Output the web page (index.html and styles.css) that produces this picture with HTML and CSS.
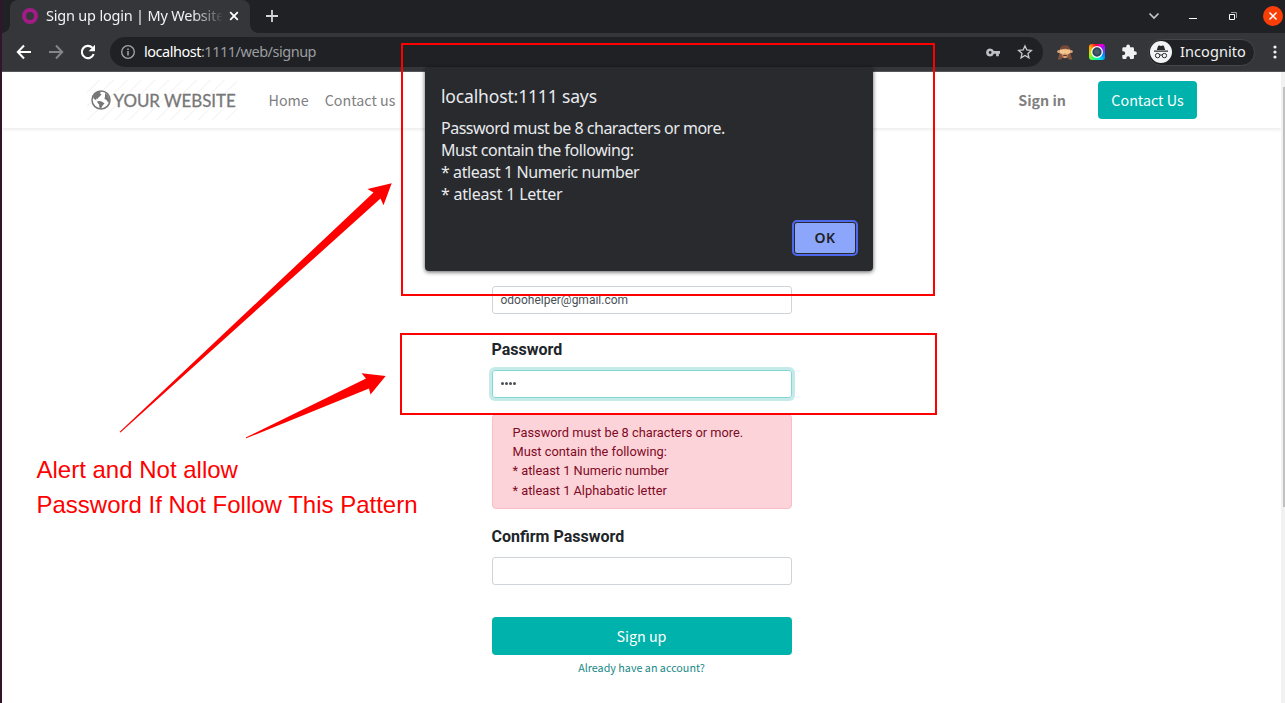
FILE: index.html
```
<!DOCTYPE html>
<html lang="en">
<head>
<meta charset="utf-8">
<title>Sign up login | My Website</title>
<link rel="stylesheet" href="styles.css">
</head>
<body>
<div class="window">
  <div class="tabbar">
    <div class="tab">
      <svg class="favicon" width="16" height="16" viewBox="0 0 16 16"><circle cx="8" cy="8" r="6" fill="none" stroke="#a21b86" stroke-width="4"/></svg>
      <span class="tab-title">Sign up login | My Website</span>
      <svg class="tab-close" width="10" height="10" viewBox="0 0 10 10"><path d="M1.2 1.2l7.6 7.6M8.8 1.2L1.2 8.8" stroke="#fff" stroke-width="1.8"/></svg>
    </div>
    <svg class="new-tab" width="14" height="14" viewBox="0 0 14 14"><path d="M7 1v12M1 7h12" stroke="#d2d3d5" stroke-width="1.8"/></svg>
    <div class="window-controls">
      <svg width="12" height="8" viewBox="0 0 12 8"><path d="M1.5 1.5L6 6l4.500-4.500" fill="none" stroke="#c4c6ca" stroke-width="1.7"/></svg>
      <svg width="8" height="8" viewBox="0 0 8 8"><path d="M0 6.500h8" stroke="#fff"/></svg>
      <svg width="8" height="8" viewBox="0 0 8 8"><path d="M.5 2.500h5v5h-5z" fill="none" stroke="#fff"/><path d="M2 .5h5.500V6" fill="none" stroke="#96979b"/></svg>
      <svg width="20" height="20" viewBox="0 0 20 20"><circle cx="10" cy="10" r="10" fill="#f93e07"/><path d="M6.500 6.500l7 7M13.500 6.500l-7 7" stroke="#fff" stroke-width="1.500"/></svg>
    </div>
  </div>
  <div class="toolbar">
    <svg class="nav-icon" width="16" height="16" viewBox="0 0 16 16"><path d="M15 8H2M8 1.500L1.800 8 8 14.500" fill="none" stroke="#fff" stroke-width="2"/></svg>
    <svg class="nav-icon" width="16" height="16" viewBox="0 0 16 16"><path d="M1 8h13M8 1.500L14.200 8 8 14.500" fill="none" stroke="#85868a" stroke-width="2"/></svg>
    <svg class="nav-icon" width="16" height="16" viewBox="0 0 16 16"><path d="M13.700 10A6.100 6.100 0 1 1 12.400 3.800" fill="none" stroke="#fff" stroke-width="2.100"/><path d="M15 .8v6.400H8.600z" fill="#fff"/></svg>
    <div class="omnibox">
      <svg width="14" height="14" viewBox="0 0 14 14"><circle cx="7" cy="7" r="6.300" fill="none" stroke="#a5a7aa" stroke-width="1.300"/><path d="M7 6v4.500M7 3.500v1.500" stroke="#a5a7aa" stroke-width="1.500"/></svg>
      <span class="url"><b>localhost</b>:1111/web/signup</span>
      <svg class="key" width="14" height="9" viewBox="0 0 14 9"><path fill="#bdc1c6" fill-rule="evenodd" d="M4.100.4a4 4 0 0 1 3.800 2.700H14v2.700h-1.200v2.400h-2.700V5.800H7.900A4 4 0 1 1 4.100.4zm0 2.600a1.400 1.400 0 1 0 0 2.900 1.400 1.400 0 0 0 0-2.900z"/></svg>
      <svg width="16" height="16" viewBox="0 0 16 16"><path d="M8 1.900l1.850 4.100 4.500.45-3.400 3 1 4.400L8 11.500l-3.950 2.350 1-4.400-3.400-3 4.500-.45z" fill="none" stroke="#c8cacd" stroke-width="1.300"/></svg>
    </div>
    <div class="extensions">
      <svg width="16" height="16" viewBox="0 0 16 16"><path d="M2.500 12V6.500Q3 1.300 8 1.300t5.500 5.200V12z" fill="#76493a"/><circle cx="1.800" cy="7.500" r="1.600" fill="#d9a274"/><circle cx="14.200" cy="7.500" r="1.600" fill="#d9a274"/><ellipse cx="8" cy="9.500" rx="4.800" ry="4.700" fill="#dba06e"/><path d="M2.800 5.500h4.700L8 6.500l.5-1h4.700v3.500l-3.700 1L8 8.800 6.500 10l-3.700-1z" fill="#f6c690"/><path d="M5.800 12q2.200-1.600 4.400 0" fill="none" stroke="#4b2d27"/><path d="M.8 15.500l1.700-6 2.800 1v3l-1 2zM15.200 15.500l-1.700-6-2.800 1v3l1 2z" fill="#85543f"/></svg>
      <div class="rainbow"><svg width="14" height="14" viewBox="0 0 14 14"><circle cx="7" cy="7" r="5.300" fill="#27445d" stroke="#fff" stroke-width="1.300"/><circle cx="7" cy="7" r="2.800" fill="#4c5b63"/></svg></div>
      <svg width="16" height="16" viewBox="0 0 24 24"><path fill="#eff1f3" d="M21 11h-1.500V7a2 2 0 0 0-2-2H13.500V3.500a2.800 2.800 0 0 0-5.600 0V5H4a2 2 0 0 0-2 2v4h1.500a2.800 2.800 0 0 1 0 5.600H2v4a2 2 0 0 0 2 2h4V21a2.700 2.700 0 0 1 5.500 0v1.600h4a2 2 0 0 0 2-2v-4H21A2.800 2.800 0 0 0 21 11z"/></svg>
    </div>
    <div class="incognito">
      <svg width="22" height="22" viewBox="0 0 22 22"><circle cx="11" cy="11" r="11" fill="#f3f4f5"/><path d="M6.800 9l1.300-4q.3-.8 1.200-.5l1.700.5 1.700-.5q.9-.3 1.200.5l1.300 4zM4 9.500h14v1.300H4z" fill="#292a2d"/><g fill="none" stroke="#292a2d"><circle cx="7.600" cy="14.600" r="2.200"/><circle cx="14.400" cy="14.600" r="2.200"/><path d="M9.800 14.200q1.200-.6 2.400 0"/></g></svg>
      <span>Incognito</span>
    </div>
    <svg class="menu" width="4" height="14" viewBox="0 0 4 14"><g fill="#f1f2f4"><circle cx="2" cy="2" r="1.600"/><circle cx="2" cy="7" r="1.600"/><circle cx="2" cy="12" r="1.600"/></g></svg>
  </div>
  <div class="page">
    <header class="site-header">
      <div class="logo">
        <svg width="20" height="20" viewBox="0 0 20 20"><circle cx="10" cy="10" r="9" fill="#fff" stroke="#777" stroke-width="1.500"/><path fill="#777" d="M2 6l4-4 4-.5-1 2 1.500.7-1.500 2L7.500 7.500 6.500 9 5 8.500 5.500 10.500 2.500 8.500zM14 3l3 2.500 1.500 4-1 3.500-2-3-2-1 .5-2.500zM6.500 11l3.500.3 3.500 2-2 2.500L10 18.500 8.300 17.500l-.2-3-1.800-2z"/></svg>
        <span>YOUR WEBSITE</span>
      </div>
      <nav class="site-nav"><a class="home">Home</a><a class="contact">Contact us</a></nav>
      <a class="signin">Sign in</a>
      <a class="cta">Contact Us</a>
    </header>
    <form class="signup">
      <div class="input email"><span>odoohelper@gmail.com</span></div>
      <div class="label">Password</div>
      <div class="input focused"><i></i><i></i><i></i><i></i></div>
      <div class="alert">
        <p>Password must be 8 characters or more.</p>
        <p>Must contain the following:</p>
        <p>* atleast 1 Numeric number</p>
        <p>* atleast 1 Alphabatic letter</p>
      </div>
      <div class="label confirm">Confirm Password</div>
      <div class="input"></div>
      <div class="submit">Sign up</div>
      <a class="have-account">Already have an account?</a>
    </form>
    <div class="scrollbar"><div class="thumb"></div></div>
  </div>
  <div class="dialog">
    <h1>localhost:1111 says</h1>
    <p class="wide">Password must be 8 characters or more.</p>
    <p>Must contain the following:</p>
    <p>* atleast 1 Numeric number</p>
    <p class="last">* atleast 1 Letter</p>
    <div class="ok-ring"><div class="ok">OK</div></div>
  </div>
  <div class="mark mark-dialog"></div>
  <div class="mark mark-password"></div>
  <svg class="arrows" width="300" height="270" viewBox="110 175 300 270"><path fill="#f00" d="M119.500 432L373.500 192.500 367.500 189 391.700 183.200 383.500 205.200 380.500 198.500 120.500 432.500zM245.700 437.500L366 378.500 361.500 373.200 385.700 376 370.500 394.500 369 388.500 246.300 438.300z"/></svg>
  <div class="note"><p>Alert and Not allow</p><p>Password If Not Follow This Pattern</p></div>
</div>
</body>
</html>
```
FILE: styles.css
```
* { box-sizing: border-box; }
body { margin: 0; background: #fff; font-family: "Noto Sans", sans-serif; }
p, h1 { margin: 0; }
svg { display: block; flex: none; }
.window {
  position: relative; width: 1285px; height: 703px; overflow: hidden;
  display: flex; flex-direction: column; border-left: 2px solid #34142b;
}
.tabbar { height: 33px; flex: none; background: #202124; display: flex; align-items: flex-start; padding-left: 8px; }
.tab {
  position: relative; width: 240px; height: 33px; background: #35363a; border-radius: 8px 8px 0 0;
  display: flex; align-items: center; padding: 0 11px 1px 12px; color: #f1f2f4;
}
.tab::before, .tab::after { content: ""; position: absolute; bottom: 0; width: 8px; height: 8px; }
.tab::before { left: -8px; background: radial-gradient(circle at 0 0, #202124 7.5px, #35363a 8px); }
.tab::after { right: -8px; background: radial-gradient(circle at 100% 0, #202124 7.5px, #35363a 8px); }
.tab-title {
  width: 176px; margin: -2px 0 0 8px; overflow: hidden; white-space: nowrap; font-size: 14.5px; line-height: 20px;
  letter-spacing: -.2px; -webkit-mask-image: linear-gradient(90deg, #000 146px, transparent 178px);
}
.tab-close { margin-left: 7px; }
.new-tab { margin: 9px 0 0 15px; }
.window-controls { margin-left: auto; display: flex; align-items: center; height: 32px; }
.window-controls svg:first-child { margin-right: 29px; }
.window-controls svg:nth-child(2) { margin-right: 32px; }
.window-controls svg:nth-child(3) { margin-right: 26px; }
.window-controls svg:last-child { margin-right: 2px; }
.toolbar {
  height: 39px; flex: none; background: #35363a; border-bottom: 1px solid #55565a;
  display: flex; align-items: center; padding-left: 14px;
}
.nav-icon { margin-right: 16px; }
.omnibox {
  width: 933px; height: 30px; margin-left: -2px; background: #202124; border-radius: 15px;
  display: flex; align-items: center; padding: 0 10px 0 11px;
}
.url { margin: 0 auto 2px 9px; font-size: 14.5px; color: #9b9da1; letter-spacing: -.48px; }
.url b { color: #fff; font-weight: 400; }
.key { margin-right: 17px; }
.extensions { display: flex; align-items: center; gap: 16px; margin-left: 14px; }
.rainbow {
  width: 16px; height: 16px; border-radius: 3px; display: grid; place-items: center;
  background: conic-gradient(from 45deg, #b0f, #08f 20%, #0de 30%, #0f9 40%, #be0 58%, #fa0 72%, #f03 85%, #d0f);
}
.incognito {
  width: 107px; height: 27px; margin-left: 11px; border: 1px solid #454649; border-radius: 14px; background: #202124;
  display: flex; align-items: center; padding-left: 1px; color: #f0f1f2; font-size: 14.5px;
}
.incognito span { margin: 0 0 2px 8px; letter-spacing: .08px; }
.menu { margin-left: 18px; }
.page { flex: 1; display: grid; grid-template-columns: 1fr 4px; grid-template-rows: 56px 1fr; }
.site-header {
  height: 56px; padding-left: 85px; display: flex; align-items: center; color: #808080;
  font-family: "Noto Sans CJK SC", sans-serif; font-size: 14.3px; box-shadow: 0 2px 3px rgba(0,0,0,.07);
}
.logo {
  width: 150px; height: 40px; display: flex; align-items: center; padding-left: 4px; color: #777;
  background: repeating-linear-gradient(135deg, #fff 0 8px, #f5f5f5 8.6px 9.2px, #fff 9.8px);
  font-family: Lato, sans-serif; font-size: 16.9px; font-weight: 400; white-space: nowrap;
}
.logo span { margin-left: 2.5px; -webkit-text-stroke: .3px #777; }
.site-nav { display: flex; margin: -1px 0 0 31.5px; gap: 16px; }
.signin { margin: -1px 0 0 auto; font-weight: 700; }
.cta { width: 99px; height: 38px; margin: 0 84px 0 32px; padding-bottom: 1px; border-radius: 4px; background: #00b2ac; color: #fff; display: grid; place-items: center; }
.signup { width: 300px; margin: 158px 0 0 490px; grid-row: 2; display: flex; flex-direction: column; font-family: Roboto, sans-serif; color: #212529; }
.input { height: 28px; flex: none; border: 1px solid #ced4da; border-radius: 3px; padding: 0 8px; display: flex; align-items: center; gap: 1px; color: #495057; }
.email span { margin-left: -.5px; font-size: 12px; }
.label { height: 24px; margin: 24px 0 8px -.5px; font-size: 16px; line-height: 24px; font-weight: 700; }
.focused { border-color: #7fd9d6; box-shadow: 0 0 0 3px #c5eae9; padding-bottom: 1px; }
.focused i { width: 3px; height: 3px; border-radius: 50%; background: #495057; }
.alert { height: 95px; margin-top: 16px; border: 1px solid #f9bfc9; border-radius: 4px; background: #fdd3da; color: #7d0a24; padding: 8px 19.5px; font-size: 12.8px; line-height: 19.2px; }
.label.confirm { margin: 16px 0 8px -.5px; }
.submit { height: 38px; margin-top: 32px; padding: 0 1px 1px 0; border-radius: 4px; background: #00b2ac; color: #fff; display: grid; place-items: center; font-family: "Noto Sans CJK SC", sans-serif; font-size: 14.3px; }
.have-account { align-self: center; margin: 3px 1px 0 0; font-family: "Noto Sans CJK SC", sans-serif; font-size: 10.75px; line-height: 20px; color: #188887; }
.scrollbar { grid-column: 2; grid-row: 1 / 3; background: #f1f1f1; padding: 15px 0 0 2px; }
.thumb { height: 420px; background: #c1c1c1; }
.dialog {
  position: absolute; left: 423px; top: 67px; width: 448px; height: 204px; border-radius: 4px; background: #292a2d;
  color: #e8eaed; padding: 18px 16px; box-shadow: 0 1px 4px rgba(0,0,0,.65); font-size: 16px; line-height: 22px; white-space: nowrap;
  display: flex; flex-direction: column;
}
.dialog h1 { font-size: 17.5px; font-weight: 400; line-height: 22px; margin-bottom: 10px; letter-spacing: -.15px; }
.dialog p { letter-spacing: -.44px; }
.dialog .wide { letter-spacing: -.5px; }
.dialog .last { letter-spacing: -.22px; }
.ok-ring { width: 66px; height: 36px; align-self: flex-end; margin: 15px -1px 0 0; border: 2px solid #4e69ee; border-radius: 5px; padding: 1px; flex: none; }
.ok { height: 30px; background: #8ba6fb; border-radius: 2px; display: grid; place-items: center; color: #202124; font-size: 14px; font-weight: 600; letter-spacing: .4px; }
.mark { position: absolute; border: 2px solid #f00; }
.mark-dialog { left: 399px; top: 43px; width: 534px; height: 253px; }
.mark-password { left: 398px; top: 333px; width: 537px; height: 82px; }
.arrows { position: absolute; left: 108px; top: 175px; }
.note { position: absolute; left: 34.5px; top: 452px; color: #f00; font-family: "Liberation Sans", sans-serif; font-size: 24px; line-height: 35px; white-space: nowrap; }
```
